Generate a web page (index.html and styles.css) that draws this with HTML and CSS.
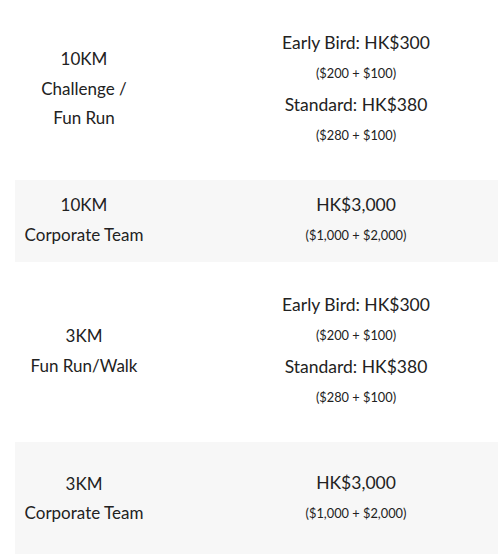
FILE: index.html
```html
<!DOCTYPE html>
<html>
<head>
<meta charset="utf-8">
<link rel="stylesheet" href="styles.css">
</head>
<body>
<div class="table">
  <div class="row row-tall">
    <div class="cell cell-name">
      <div class="name-line">10KM</div>
      <div class="name-line">Challenge /</div>
      <div class="name-line">Fun Run</div>
    </div>
    <div class="cell cell-price">
      <div class="price-line">Early Bird: HK$300</div>
      <div class="sub-line">($200 + $100)</div>
      <div class="price-line">Standard: HK$380</div>
      <div class="sub-line">($280 + $100)</div>
    </div>
  </div>
  <div class="row row-short shaded">
    <div class="cell cell-name">
      <div class="name-line">10KM</div>
      <div class="name-line">Corporate Team</div>
    </div>
    <div class="cell cell-price">
      <div class="price-line">HK$3,000</div>
      <div class="sub-line">($1,000 + $2,000)</div>
    </div>
  </div>
  <div class="row row-tall">
    <div class="cell cell-name">
      <div class="name-line">3KM</div>
      <div class="name-line">Fun Run/Walk</div>
    </div>
    <div class="cell cell-price">
      <div class="price-line">Early Bird: HK$300</div>
      <div class="sub-line">($200 + $100)</div>
      <div class="price-line">Standard: HK$380</div>
      <div class="sub-line">($280 + $100)</div>
    </div>
  </div>
  <div class="row row-mid shaded">
    <div class="cell cell-name">
      <div class="name-line">3KM</div>
      <div class="name-line">Corporate Team</div>
    </div>
    <div class="cell cell-price">
      <div class="price-line">HK$3,000</div>
      <div class="sub-line">($1,000 + $2,000)</div>
    </div>
  </div>
</div>
</body>
</html>
```
FILE: styles.css
```css
html, body {
  margin: 0;
  padding: 0;
  background: #ffffff;
}

body {
  font-family: Lato, "Open Sans", sans-serif;
  color: #222222;
}

.table {
  margin-left: 15px;
}

.row {
  display: grid;
  grid-template-columns: 138px 1fr;
  align-items: center;
}

.row-tall {
  height: 180px;
}

.row-short {
  height: 82px;
}

.row-mid {
  height: 115px;
}

.shaded {
  background: #f7f7f7;
}

.cell {
  text-align: center;
  padding-bottom: 3px;
}

.cell-price {
  padding-left: 61px;
}

.name-line {
  font-size: 17px;
  line-height: 29.5px;
}

.price-line {
  font-size: 17.5px;
  line-height: 31px;
}

.sub-line {
  font-size: 12.8px;
  line-height: 31px;
}
```
